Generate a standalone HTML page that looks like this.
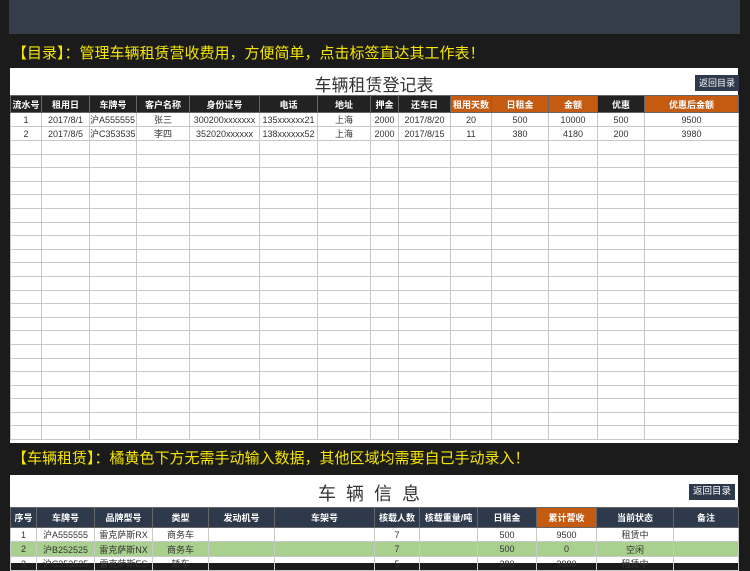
<!DOCTYPE html>
<html><head><meta charset="utf-8"><style>
*{margin:0;padding:0;box-sizing:border-box}
body{width:750px;height:563px;overflow:hidden;background:#1b1b1b;font-family:"Liberation Sans","Noto Sans CJK SC",sans-serif;position:relative}
.top{position:absolute;left:9px;top:0;width:731px;height:34px;background:#353d4b}
.y{position:absolute;left:12px;color:#f5e600;font-size:15px;white-space:nowrap}
.panel{position:absolute;left:10px;width:728px;background:#fff}
table{border-collapse:collapse;table-layout:fixed;width:728px;position:absolute;left:0}
td{border:1px solid #c8c8c8;font-size:9px;text-align:center;color:#333;overflow:hidden;white-space:nowrap;padding:0}
th{font-size:9px;color:#fff;font-weight:bold;border:1px solid #666;white-space:nowrap;overflow:hidden}
.k{background:#222}.o{background:#c55a11}.n{background:#2e3a4c}
.btn{position:absolute;background:#2e3a4c;color:#fff;font-size:9px;padding:3px 4px;white-space:nowrap;line-height:10px}
.g td{background:#a9d08e}
.r td{height:13.6px}
</style></head><body>
<div class="top"></div>
<div class="y" style="top:42px">【目录】：管理车辆租赁营收费用，方便简单，点击标签直达其工作表！</div>
<div class="panel" style="top:68px;height:375px">
<div style="position:absolute;left:0;width:728px;top:3px;text-align:center;font-size:17px;color:#333">车辆租赁登记表</div>
<div class="btn" style="left:685px;top:7px">返回目录</div>
<table style="top:27px">
<colgroup><col style="width:31px"><col style="width:48px"><col style="width:47px"><col style="width:53px"><col style="width:70px"><col style="width:58px"><col style="width:53px"><col style="width:28px"><col style="width:52px"><col style="width:41px"><col style="width:57px"><col style="width:49px"><col style="width:47px"><col style="width:94px"></colgroup>
<tr style="height:17px"><th class="k">流水号</th><th class="k">租用日</th><th class="k">车牌号</th><th class="k">客户名称</th><th class="k">身份证号</th><th class="k">电话</th><th class="k">地址</th><th class="k">押金</th><th class="k">还车日</th><th class="o">租用天数</th><th class="o">日租金</th><th class="o">金额</th><th class="k">优惠</th><th class="o">优惠后金额</th></tr>
<tr style="height:14px"><td>1</td><td>2017/8/1</td><td style="text-align:left">沪A555555</td><td>张三</td><td>300200xxxxxxx</td><td>135xxxxxx21</td><td>上海</td><td>2000</td><td>2017/8/20</td><td>20</td><td>500</td><td>10000</td><td>500</td><td>9500</td></tr>
<tr style="height:14px"><td>2</td><td>2017/8/5</td><td style="text-align:left">沪C353535</td><td>李四</td><td>352020xxxxxx</td><td>138xxxxxx52</td><td>上海</td><td>2000</td><td>2017/8/15</td><td>11</td><td>380</td><td>4180</td><td>200</td><td>3980</td></tr>
<tr class="r"><td></td><td></td><td></td><td></td><td></td><td></td><td></td><td></td><td></td><td></td><td></td><td></td><td></td><td></td></tr>
<tr class="r"><td></td><td></td><td></td><td></td><td></td><td></td><td></td><td></td><td></td><td></td><td></td><td></td><td></td><td></td></tr>
<tr class="r"><td></td><td></td><td></td><td></td><td></td><td></td><td></td><td></td><td></td><td></td><td></td><td></td><td></td><td></td></tr>
<tr class="r"><td></td><td></td><td></td><td></td><td></td><td></td><td></td><td></td><td></td><td></td><td></td><td></td><td></td><td></td></tr>
<tr class="r"><td></td><td></td><td></td><td></td><td></td><td></td><td></td><td></td><td></td><td></td><td></td><td></td><td></td><td></td></tr>
<tr class="r"><td></td><td></td><td></td><td></td><td></td><td></td><td></td><td></td><td></td><td></td><td></td><td></td><td></td><td></td></tr>
<tr class="r"><td></td><td></td><td></td><td></td><td></td><td></td><td></td><td></td><td></td><td></td><td></td><td></td><td></td><td></td></tr>
<tr class="r"><td></td><td></td><td></td><td></td><td></td><td></td><td></td><td></td><td></td><td></td><td></td><td></td><td></td><td></td></tr>
<tr class="r"><td></td><td></td><td></td><td></td><td></td><td></td><td></td><td></td><td></td><td></td><td></td><td></td><td></td><td></td></tr>
<tr class="r"><td></td><td></td><td></td><td></td><td></td><td></td><td></td><td></td><td></td><td></td><td></td><td></td><td></td><td></td></tr>
<tr class="r"><td></td><td></td><td></td><td></td><td></td><td></td><td></td><td></td><td></td><td></td><td></td><td></td><td></td><td></td></tr>
<tr class="r"><td></td><td></td><td></td><td></td><td></td><td></td><td></td><td></td><td></td><td></td><td></td><td></td><td></td><td></td></tr>
<tr class="r"><td></td><td></td><td></td><td></td><td></td><td></td><td></td><td></td><td></td><td></td><td></td><td></td><td></td><td></td></tr>
<tr class="r"><td></td><td></td><td></td><td></td><td></td><td></td><td></td><td></td><td></td><td></td><td></td><td></td><td></td><td></td></tr>
<tr class="r"><td></td><td></td><td></td><td></td><td></td><td></td><td></td><td></td><td></td><td></td><td></td><td></td><td></td><td></td></tr>
<tr class="r"><td></td><td></td><td></td><td></td><td></td><td></td><td></td><td></td><td></td><td></td><td></td><td></td><td></td><td></td></tr>
<tr class="r"><td></td><td></td><td></td><td></td><td></td><td></td><td></td><td></td><td></td><td></td><td></td><td></td><td></td><td></td></tr>
<tr class="r"><td></td><td></td><td></td><td></td><td></td><td></td><td></td><td></td><td></td><td></td><td></td><td></td><td></td><td></td></tr>
<tr class="r"><td></td><td></td><td></td><td></td><td></td><td></td><td></td><td></td><td></td><td></td><td></td><td></td><td></td><td></td></tr>
<tr class="r"><td></td><td></td><td></td><td></td><td></td><td></td><td></td><td></td><td></td><td></td><td></td><td></td><td></td><td></td></tr>
<tr class="r"><td></td><td></td><td></td><td></td><td></td><td></td><td></td><td></td><td></td><td></td><td></td><td></td><td></td><td></td></tr>
<tr class="r"><td></td><td></td><td></td><td></td><td></td><td></td><td></td><td></td><td></td><td></td><td></td><td></td><td></td><td></td></tr>
</table>
</div>
<div class="y" style="top:447px">【车辆租赁】：橘黄色下方无需手动输入数据，其他区域均需要自己手动录入！</div>
<div class="panel" style="top:475px;height:88px">
<div style="position:absolute;left:0;width:728px;top:5px;text-align:center;font-size:18px;color:#333;letter-spacing:10px">车辆信息</div>
<div class="btn" style="left:679px;top:9px;font-size:9.5px">返回目录</div>
<table style="top:32px">
<colgroup><col style="width:26px"><col style="width:58px"><col style="width:58px"><col style="width:56px"><col style="width:66px"><col style="width:100px"><col style="width:45px"><col style="width:58px"><col style="width:59px"><col style="width:60px"><col style="width:77px"><col style="width:65px"></colgroup>
<tr style="height:20px"><th class="n">序号</th><th class="n">车牌号</th><th class="n">品牌型号</th><th class="n">类型</th><th class="n">发动机号</th><th class="n">车架号</th><th class="n">核载人数</th><th class="n">核载重量/吨</th><th class="n">日租金</th><th class="o">累计营收</th><th class="n">当前状态</th><th class="n">备注</th></tr>
<tr style="height:14px"><td>1</td><td>沪A555555</td><td>雷克萨斯RX</td><td>商务车</td><td></td><td></td><td>7</td><td></td><td>500</td><td>9500</td><td>租赁中</td><td></td></tr>
<tr class="g" style="height:15px"><td>2</td><td>沪B252525</td><td>雷克萨斯NX</td><td>商务车</td><td></td><td></td><td>7</td><td></td><td>500</td><td>0</td><td>空闲</td><td></td></tr>
<tr style="height:14px"><td>3</td><td>沪C353535</td><td>雷克萨斯ES</td><td>轿车</td><td></td><td></td><td>5</td><td></td><td>380</td><td>3980</td><td>租赁中</td><td></td></tr>
</table>
</div>
</body></html>
